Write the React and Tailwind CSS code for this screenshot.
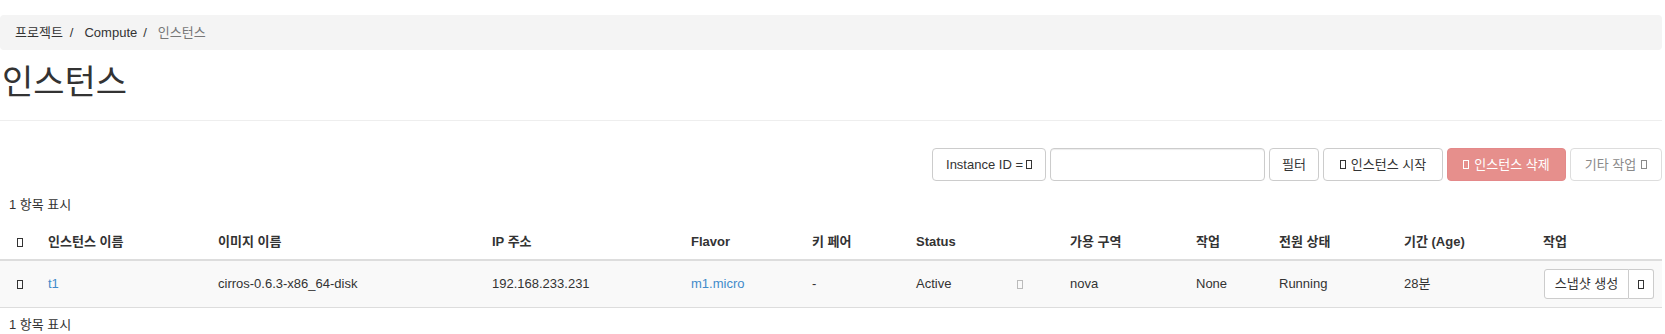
import React from "react";

const font = { fontFamily: '"Liberation Sans", "Noto Sans CJK KR", sans-serif' };

function Tofu({ className = "" }) {
  return <span className={`inline-block w-[6px] h-[9px] border border-current align-[-1px] ${className}`} />;
}

const cols = [40, 170, 274, 199, 121, 104, 101, 53, 126, 83, 125, 139, 127];

export default function App() {
  return (
    <div className="bg-white text-[13px] text-[#333] pr-[3px] pt-[15px]" style={font}>
      {/* breadcrumb */}
      <div className="h-[35px] bg-[#f4f4f4] rounded-[4px] flex items-center pl-[15px]">
        <span>프로젝트</span>
        <span className="ml-[7px] mr-[11px]">/</span>
        <span>Compute</span>
        <span className="ml-[6px] mr-[11px]">/</span>
        <span className="text-[#777]">인스턴스</span>
      </div>

      {/* title */}
      <div className="pt-[12px] pb-[17px] border-b border-[#eee]">
        <h1 className="text-[34px] leading-[41px] pl-[2px] font-normal text-[#333]">인스턴스</h1>
      </div>

      {/* toolbar */}
      <div className="mt-[27px] flex justify-end gap-[4px]">
        <button className="w-[114px] h-[33px] border border-[#ccc] rounded-[4px] bg-white flex items-center justify-center gap-[3px]">
          Instance ID = <Tofu />
        </button>
        <input className="w-[215px] h-[33px] border border-[#ccc] rounded-[4px] bg-white shadow-[inset_0_1px_1px_rgba(0,0,0,0.075)] px-3 outline-none" />
        <button className="w-[50px] h-[33px] border border-[#ccc] rounded-[4px] bg-white">필터</button>
        <button className="w-[120px] h-[33px] border border-[#ccc] rounded-[4px] bg-white flex items-center justify-center gap-[5px]">
          <Tofu /> 인스턴스 시작
        </button>
        <button className="w-[119px] h-[33px] border border-[#e4898a] rounded-[4px] bg-[#e68f8c] text-white flex items-center justify-center gap-[5px]">
          <Tofu /> 인스턴스 삭제
        </button>
        <button className="w-[92px] h-[33px] border border-[#ddd] rounded-[4px] bg-white text-[#8a8a8a] flex items-center justify-center gap-[5px]">
          기타 작업 <Tofu />
        </button>
      </div>

      <div className="mt-[14px] pl-[9px] leading-[19px]">1 항목 표시</div>

      {/* table */}
      <table className="mt-[10px] w-full table-fixed border-collapse">
        <colgroup>
          {cols.map((w, i) => (
            <col key={i} style={{ width: i === cols.length - 1 ? "auto" : w }} />
          ))}
        </colgroup>
        <thead>
          <tr className="text-left">
            <th className="pl-[17px] py-2 leading-[19px] border-b-2 border-[#ddd] font-bold"><Tofu /></th>
            <th className="px-2 py-2 leading-[19px] border-b-2 border-[#ddd] font-bold">인스턴스 이름</th>
            <th className="px-2 py-2 leading-[19px] border-b-2 border-[#ddd] font-bold">이미지 이름</th>
            <th className="px-2 py-2 leading-[19px] border-b-2 border-[#ddd] font-bold">IP 주소</th>
            <th className="px-2 py-2 leading-[19px] border-b-2 border-[#ddd] font-bold">Flavor</th>
            <th className="px-2 py-2 leading-[19px] border-b-2 border-[#ddd] font-bold">키 페어</th>
            <th className="px-2 py-2 leading-[19px] border-b-2 border-[#ddd] font-bold">Status</th>
            <th className="px-2 py-2 leading-[19px] border-b-2 border-[#ddd] font-bold"></th>
            <th className="px-2 py-2 leading-[19px] border-b-2 border-[#ddd] font-bold">가용 구역</th>
            <th className="px-2 py-2 leading-[19px] border-b-2 border-[#ddd] font-bold">작업</th>
            <th className="px-2 py-2 leading-[19px] border-b-2 border-[#ddd] font-bold">전원 상태</th>
            <th className="px-2 py-2 leading-[19px] border-b-2 border-[#ddd] font-bold">기간 (Age)</th>
            <th className="px-2 py-2 leading-[19px] border-b-2 border-[#ddd] font-bold">작업</th>
          </tr>
        </thead>
        <tbody>
          <tr className="bg-[#f9f9f9]">
            <td className="pl-[17px] py-2 border-b border-[#ddd]"><Tofu /></td>
            <td className="px-2 py-2 border-b border-[#ddd] text-[#428bca]">t1</td>
            <td className="px-2 py-2 border-b border-[#ddd]">cirros-0.6.3-x86_64-disk</td>
            <td className="px-2 py-2 border-b border-[#ddd]">192.168.233.231</td>
            <td className="px-2 py-2 border-b border-[#ddd] text-[#428bca]">m1.micro</td>
            <td className="px-2 py-2 border-b border-[#ddd]">-</td>
            <td className="px-2 py-2 border-b border-[#ddd]">Active</td>
            <td className="px-2 py-2 border-b border-[#ddd] text-[#bbb]"><Tofu /></td>
            <td className="px-2 py-2 border-b border-[#ddd]">nova</td>
            <td className="px-2 py-2 border-b border-[#ddd]">None</td>
            <td className="px-2 py-2 border-b border-[#ddd]">Running</td>
            <td className="px-2 py-2 border-b border-[#ddd]">28분</td>
            <td className="pl-[9px] pr-2 py-2 border-b border-[#ddd]">
              <div className="flex h-[30px]">
                <button className="w-[85px] h-[30px] border border-[#ccc] rounded-l-[3px] bg-white">스냅샷 생성</button>
                <button className="w-[25px] h-[30px] border border-l-0 border-[#ccc] rounded-r-[3px] bg-white flex items-center justify-center">
                  <Tofu />
                </button>
              </div>
            </td>
          </tr>
        </tbody>
      </table>

      <div className="mt-[7px] pl-[9px] leading-[19px]">1 항목 표시</div>
    </div>
  );
}
